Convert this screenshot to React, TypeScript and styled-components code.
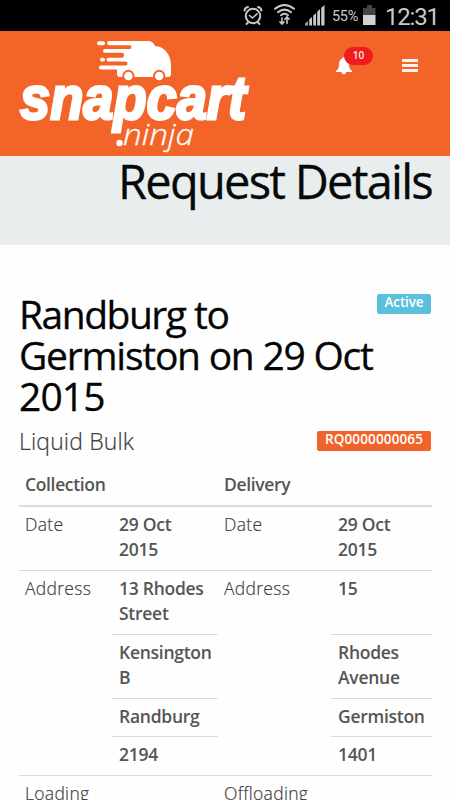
import React from "react";
import styled, { createGlobalStyle } from "styled-components";

const GlobalStyle = createGlobalStyle`
  * { box-sizing: border-box; }
  html, body { margin: 0; padding: 0; background: #fff; }
  body { font-family: "Open Sans", "Noto Sans", sans-serif; color: #555; }
`;

const Screen = styled.div`
  width: 450px;
  height: 800px;
  overflow: hidden;
  display: flex;
  flex-direction: column;
  background: #fefefe;
`;

const StatusBar = styled.div`
  flex: none;
  height: 31px;
  background: #000;
  display: flex;
  align-items: center;
  color: #c9c9c9;
  font-family: Roboto, sans-serif;
  padding-left: 242px;
`;

const StatusIcons = styled.svg`
  display: block;
  flex: none;
`;

const BatteryLevel = styled.span`
  width: 28px;
  margin-left: 4px;
  font-size: 14.5px;
  line-height: 20px;
  letter-spacing: -0.3px;
  padding-top: 3px;
  white-space: nowrap;
`;

const Clock = styled.span`
  margin-left: 8px;
  font-size: 24px;
  line-height: 28px;
  letter-spacing: -1.2px;
  padding-top: 3px;
  white-space: nowrap;
`;

const Header = styled.header`
  flex: none;
  height: 125px;
  background: #f26427;
  display: flex;
  align-items: flex-start;
`;

const Logo = styled.svg`
  flex: none;
  display: block;
`;

const Notifications = styled.div`
  position: relative;
  width: 40px;
  height: 26px;
  margin: 16px 0 0 75px;
`;

const Badge = styled.span`
  position: absolute;
  left: 9px;
  top: 0;
  width: 29px;
  height: 18px;
  border-radius: 9px;
  background: #ee1c1b;
  color: #ffe9e4;
  font-size: 10px;
  font-weight: 600;
  line-height: 16px;
  text-align: center;
`;

const BellIcon = styled.svg`
  display: block;
  padding-top: 10px;
`;

const MenuButton = styled.div`
  width: 16px;
  margin: 28px 0 0 27px;
  display: flex;
  flex-direction: column;
  gap: 2.5px;
`;

const MenuBar = styled.span`
  height: 2.7px;
  background: #fff1ea;
`;

const TitleBand = styled.div`
  flex: none;
  height: 89px;
  background: #e8eeee;
  display: flex;
  justify-content: flex-end;
  padding-right: 18px;
`;

const PageTitle = styled.h1`
  margin: 0;
  height: 51px;
  font-size: 47px;
  font-weight: 400;
  line-height: 50px;
  letter-spacing: -1.75px;
  color: #080a0a;
  -webkit-text-stroke: 0.3px #080a0a;
  white-space: nowrap;
`;

const Content = styled.main`
  padding: 49px 19px 0 19px;
`;

const RequestHead = styled.div`
  display: flex;
  justify-content: space-between;
  align-items: flex-start;
`;

const RequestTitle = styled.h2`
  margin: -1px 0 0;
  width: 356px;
  color: #050505;
  -webkit-text-stroke: 0.3px #050505;
`;

const TitleLine = styled.span<{ $spacing: number }>`
  display: block;
  font-size: 39px;
  font-weight: 400;
  line-height: 41px;
  letter-spacing: ${(p) => p.$spacing}px;
  white-space: nowrap;
`;

const Tag = styled.span<{ $tone: "info" | "brand" }>`
  flex: none;
  width: ${(p) => (p.$tone === "info" ? 54 : 114)}px;
  height: 20px;
  margin-top: ${(p) => (p.$tone === "info" ? 0 : 5)}px;
  border-radius: 2px;
  background: ${(p) => (p.$tone === "info" ? "#5bc0de" : "#f1632a")};
  color: #fff;
  font-size: 13.5px;
  font-weight: 600;
  line-height: 16px;
  letter-spacing: ${(p) => (p.$tone === "info" ? -0.15 : 0.15)}px;
  text-align: center;
  white-space: nowrap;
`;

const SubHead = styled.div`
  display: flex;
  justify-content: space-between;
  height: 44px;
  margin-top: 10px;
`;

const Category = styled.span`
  font-size: 23px;
  font-weight: 300;
  line-height: 30px;
  letter-spacing: 0.15px;
  color: #404040;
  -webkit-text-stroke: 0.2px #404040;
`;

const Details = styled.div`
  display: grid;
  grid-template-columns: 93px 106px 113px 101px;
  grid-template-rows: 35px 65px 64px 64px 38px 39px 60px;
`;

const HeadCell = styled.div`
  grid-column: span 2;
  padding-left: 6px;
  margin-top: 2px;
  font-size: 17.5px;
  font-weight: 600;
  line-height: 24px;
  letter-spacing: -0.35px;
`;

const Cell = styled.div<{ $strong?: boolean; $rows?: number; $cols?: number; $heavy?: boolean }>`
  grid-row: span ${(p) => p.$rows ?? 1};
  grid-column: span ${(p) => p.$cols ?? 1};
  border-top: ${(p) => (p.$heavy ? 2 : 1)}px solid #dcdcdc;
  padding: 5px 0 0 ${(p) => (p.$strong ? 7 : 6)}px;
  font-size: 17.5px;
  font-weight: ${(p) => (p.$strong ? 600 : 300)};
  color: ${(p) => (p.$strong ? "#555" : "#404040")};
  -webkit-text-stroke: ${(p) => (p.$strong ? "0" : "0.2px #404040")};
  line-height: 25px;
  letter-spacing: ${(p) => (p.$strong ? -0.27 : 0.3)}px;
  white-space: nowrap;
`;

function SnapcartLogo() {
  return (
    <Logo width="260" height="125" viewBox="0 0 260 125">
      <g fill="#fff">
        <path d="M109 10H148Q153 10 155 15C165 15 171 25 171 34V43Q171 46 168 46H120Q117 46 117 43V38.5H101Q99 38.5 99 36.4T101 34.4H126Q127.5 34.4 127.5 32.4T126 30.4H108.5Q106.5 30.4 106.5 28.5T108.5 26.7H122Q124 26.7 124 24.2T122 21.8H105Q103 21.8 103 19.9T105 18H130Q131.5 18 131.5 16.2T130 14.2H109Q107 14.2 107 12.1T109 10Z" />
        <rect x="97" y="10.3" width="8" height="4" rx="2" />
        <rect x="100" y="26.7" width="5" height="3.8" rx="1.9" />
        <g stroke="#f26427" strokeWidth="1.9">
          <circle cx="128.4" cy="45" r="5.2" />
          <circle cx="159.2" cy="45" r="5.2" />
        </g>
      </g>
      <text
        x="20" y="88" fill="#fff" stroke="#fff" strokeWidth="2.9"
        fontFamily="Liberation Sans, sans-serif" fontWeight="700" fontStyle="italic"
        fontSize="61" textLength="226" lengthAdjust="spacingAndGlyphs"
      >snapcart</text>
      <text
        x="123" y="114" fill="#fff" stroke="#fff" strokeWidth="0.3"
        fontFamily="Open Sans, sans-serif" fontWeight="300" fontStyle="italic"
        fontSize="30" textLength="71" lengthAdjust="spacingAndGlyphs"
      >ninja</text>
      <circle cx="119.5" cy="112" r="3.2" fill="#fff" />
    </Logo>
  );
}

function SignalIcons() {
  return (
    <StatusIcons width="86" height="31" viewBox="242 0 86 31">
      <g fill="none" stroke="#c9c9c9" strokeLinecap="round">
        <circle cx="253" cy="16" r="7.2" strokeWidth="2" />
        <path d="M249.5 15.5L252.5 18L257 13.8" strokeWidth="1.6" />
        <path d="M244.5 10.5Q245 7.5 248 7M258 7Q261 7.5 261.5 10.5" strokeWidth="2" />
        <path d="M248 22.5L246.5 24M258 22.5L259.5 24" strokeWidth="1.8" />
        <path d="M275 8.8Q284.5 1.3 294 8.8M278 12.2Q284.5 7 291 12.2M281 15.2Q284.5 12.4 288 15.2" strokeWidth="2" />
        <path d="M282 24V18M279.9 21.8L282 24L284.1 21.8M287 17V23.5M284.9 19.2L287 17L289.1 19.2" strokeWidth="1.6" />
      </g>
      <g fill="#c9c9c9">
        <path d="M305 25.5V23.6L308 21V25.5Z" opacity=".8" />
        <path d="M309.2 25.5V19.6L312 17V25.5Z" />
        <path d="M313.2 25.5V15.8L316 13V25.5Z" />
        <path d="M317.2 25.5V11.8L320 9V25.5Z" />
        <path d="M321.2 25.5V8L324.5 5V25.5Z" />
      </g>
    </StatusIcons>
  );
}

export default function App() {
  return (
    <>
      <GlobalStyle />
      <Screen>
        <StatusBar>
          <SignalIcons />
          <BatteryLevel>55%</BatteryLevel>
          <StatusIcons width="17" height="31" viewBox="0 0 17 31">
            <path d="M7 5H12V8H15.5V15H3V8H7Z" fill="#454545" />
            <rect x="3" y="15" width="12.5" height="10" fill="#d2d2d2" />
          </StatusIcons>
          <Clock>12:31</Clock>
        </StatusBar>

        <Header>
          <SnapcartLogo />
          <Notifications>
            <BellIcon width="18" height="28" viewBox="0 0 18 18">
              <path d="M8.8 0C10 0 10.3 1 10.3 1.5C13 2 14 4.5 14 8C14 11 15 12.5 17 14V15H1V14C3 12.5 4 11 4 8C4 4.5 5 2 7.4 1.5C7.4 1 7.7 0 8.8 0ZM6.4 15H11.2Q10.8 17.3 8.8 17.3T6.4 15Z" fill="#fff" />
            </BellIcon>
            <Badge>10</Badge>
          </Notifications>
          <MenuButton>
            <MenuBar />
            <MenuBar />
            <MenuBar />
          </MenuButton>
        </Header>

        <TitleBand>
          <PageTitle>Request Details</PageTitle>
        </TitleBand>

        <Content>
          <RequestHead>
            <RequestTitle>
              <TitleLine $spacing={-1.5}>Randburg to</TitleLine>
              <TitleLine $spacing={-1.25}>Germiston on 29 Oct</TitleLine>
              <TitleLine $spacing={-0.9}>2015</TitleLine>
            </RequestTitle>
            <Tag $tone="info">Active</Tag>
          </RequestHead>
          <SubHead>
            <Category>Liquid Bulk</Category>
            <Tag $tone="brand">RQ0000000065</Tag>
          </SubHead>

          <Details>
            <HeadCell>Collection</HeadCell>
            <HeadCell>Delivery</HeadCell>

            <Cell $heavy>Date</Cell>
            <Cell $heavy $strong>29 Oct<br />2015</Cell>
            <Cell $heavy>Date</Cell>
            <Cell $heavy $strong>29 Oct<br />2015</Cell>

            <Cell $rows={4}>Address</Cell>
            <Cell $strong>13 Rhodes<br />Street</Cell>
            <Cell $rows={4}>Address</Cell>
            <Cell $strong>15</Cell>

            <Cell $strong>Kensington<br />B</Cell>
            <Cell $strong>Rhodes<br />Avenue</Cell>

            <Cell $strong>Randburg</Cell>
            <Cell $strong>Germiston</Cell>

            <Cell $strong>2194</Cell>
            <Cell $strong>1401</Cell>

            <Cell $cols={2}>Loading</Cell>
            <Cell $cols={2}>Offloading</Cell>
          </Details>
        </Content>
      </Screen>
    </>
  );
}
